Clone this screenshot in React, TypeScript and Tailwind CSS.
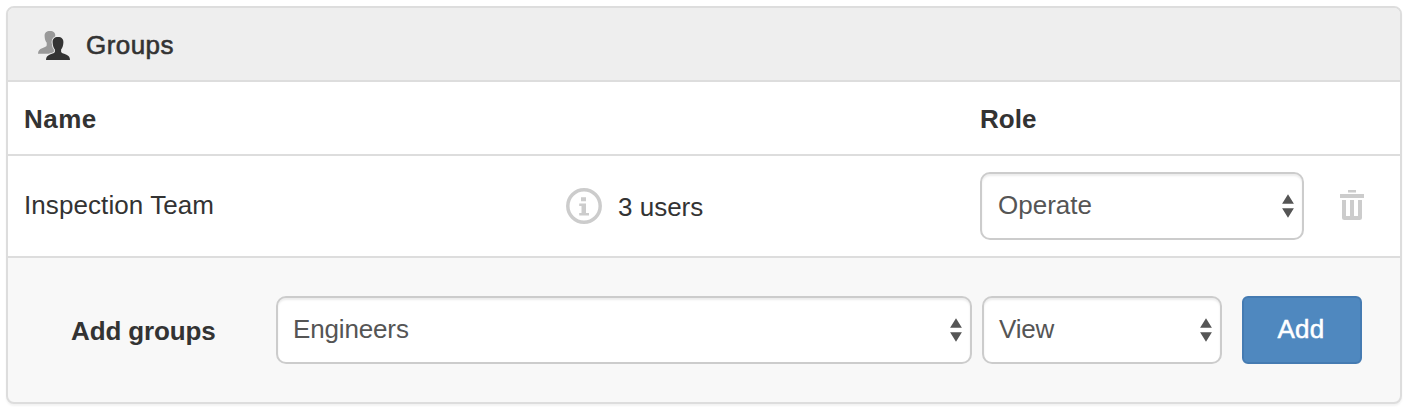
import React from "react";

function UsersIcon() {
  return (
    <svg className="mt-[2px] h-[32px] w-[34px] shrink-0" viewBox="37 29 34 32" aria-hidden="true">
      <path
        fill="#999"
        d="M50 31C46.500 31 44.500 32.800 44.600 36c.1 2.700.6 4.900 2.100 6.700v2.600c0 1.400-1.900 1.900-4.600 3-2.500 1.100-4 2.300-4.100 5.400h16V38l1.300-2c.1-3.300-1.800-5-5.300-5z"
      />
      <path
        fill="#333"
        stroke="#eee"
        strokeWidth="2"
        paintOrder="stroke"
        d="M58 37c-3.700 0-5.500 2-5.400 5.300.1 3 .7 5.200 2.300 7.200v2.300c0 1.400-2.300 1.700-4.900 2.700-2.700 1.100-3.900 2.700-4 5.500h24c-.1-2.800-1.300-4.400-4-5.500-2.600-1-4.900-1.300-4.900-2.700v-2.300c1.600-2 2.200-4.200 2.300-7.200.1-3.300-1.700-5.300-5.400-5.300z"
      />
    </svg>
  );
}

function InfoIcon() {
  return (
    <svg className="size-[36px] shrink-0" viewBox="0 0 36 36" fill="#ccc" aria-hidden="true">
      <circle cx="18" cy="18" r="16.200" fill="none" stroke="#ccc" strokeWidth="3.500" />
      <path d="M15 9.200h5v4h-5zM13.200 15.500H20v9.500h3v2.500h-9.800V25h2.300v-7h-2.300z" />
    </svg>
  );
}

function TrashIcon() {
  return (
    <svg className="-mt-[2px] h-[30px] w-[24px]" viewBox="0 0 24 30" fill="#ccc" aria-hidden="true">
      <path d="M8 0h8v2.500H8zM0 4h24v4H0z" />
      <path d="M2 10h4v16h4V10h4v16h4V10h4v17.500a2.500 2.500 0 0 1-2.500 2.500h-15A2.500 2.500 0 0 1 2 27.500z" />
    </svg>
  );
}

function SelectBox({ value, className }: { value: string; className: string }) {
  return (
    <button
      type="button"
      className={
        "flex h-[68px] shrink-0 items-center justify-between rounded-[10px] border-2 border-[#ccc] bg-white pr-2 text-[#555] shadow-[inset_0_2px_2px_rgba(0,0,0,0.075)] " +
        className
      }
    >
      <span className="-mt-[2px]">{value}</span>
      <svg className="h-[24px] w-[12px]" viewBox="0 0 12 24" fill="#555" aria-hidden="true">
        <path d="M6 .3 11.900 9.800H.1zM.1 14.200h11.800L6 23.700z" />
      </svg>
    </button>
  );
}

export default function App() {
  return (
    <div className="h-[410px] bg-white p-[6px] pr-1 font-['Liberation_Sans',Arial,sans-serif] text-[26px] leading-[36px] text-[#333]">
      <section className="h-[398px] overflow-hidden rounded-[8px] border-2 border-[#ddd] bg-[#f8f8f8] shadow-[0_2px_2px_rgba(0,0,0,0.05)]">
        <header className="flex h-[74px] items-center border-b-2 border-[#ddd] bg-[#eee] pl-[29px]">
          <UsersIcon />
          <h2 className="mt-[2px] ml-[15px] tracking-[0.45px] [-webkit-text-stroke:0.6px_#333]">
            Groups
          </h2>
        </header>
        <div className="flex h-[74px] items-center border-b-2 border-[#ddd] bg-white pt-[2px] pl-4 font-bold">
          <span className="w-[956px] tracking-[0.5px]">Name</span>
          <span>Role</span>
        </div>
        <div className="flex h-[102px] items-center border-b-2 border-[#ddd] bg-white pl-4">
          <span className="-mt-[2px] w-[542px] tracking-[0.08px]">Inspection Team</span>
          <div className="flex w-[414px] items-center gap-4">
            <InfoIcon />
            <span className="mt-[2px]">3 users</span>
          </div>
          <SelectBox value="Operate" className="w-[324px] pl-4" />
          <button type="button" className="ml-9" aria-label="Remove group">
            <TrashIcon />
          </button>
        </div>
        <div className="flex h-[144px] items-center pl-[63px]">
          <span className="mt-[2px] w-[205px] font-bold tracking-[-0.13px]">Add groups</span>
          <SelectBox value="Engineers" className="w-[696px] pl-[15px] tracking-[-0.15px]" />
          <SelectBox value="View" className="ml-[10px] w-[240px] pl-[15px] tracking-[-0.2px]" />
          <button
            type="button"
            className="ml-5 h-[68px] w-[120px] rounded-[6px] border-2 border-[#457bb2] bg-[#4f88bf] pr-[2px] pb-[2px] tracking-[0.3px] text-white [-webkit-text-stroke:0.5px_white]"
          >
            Add
          </button>
        </div>
      </section>
    </div>
  );
}
